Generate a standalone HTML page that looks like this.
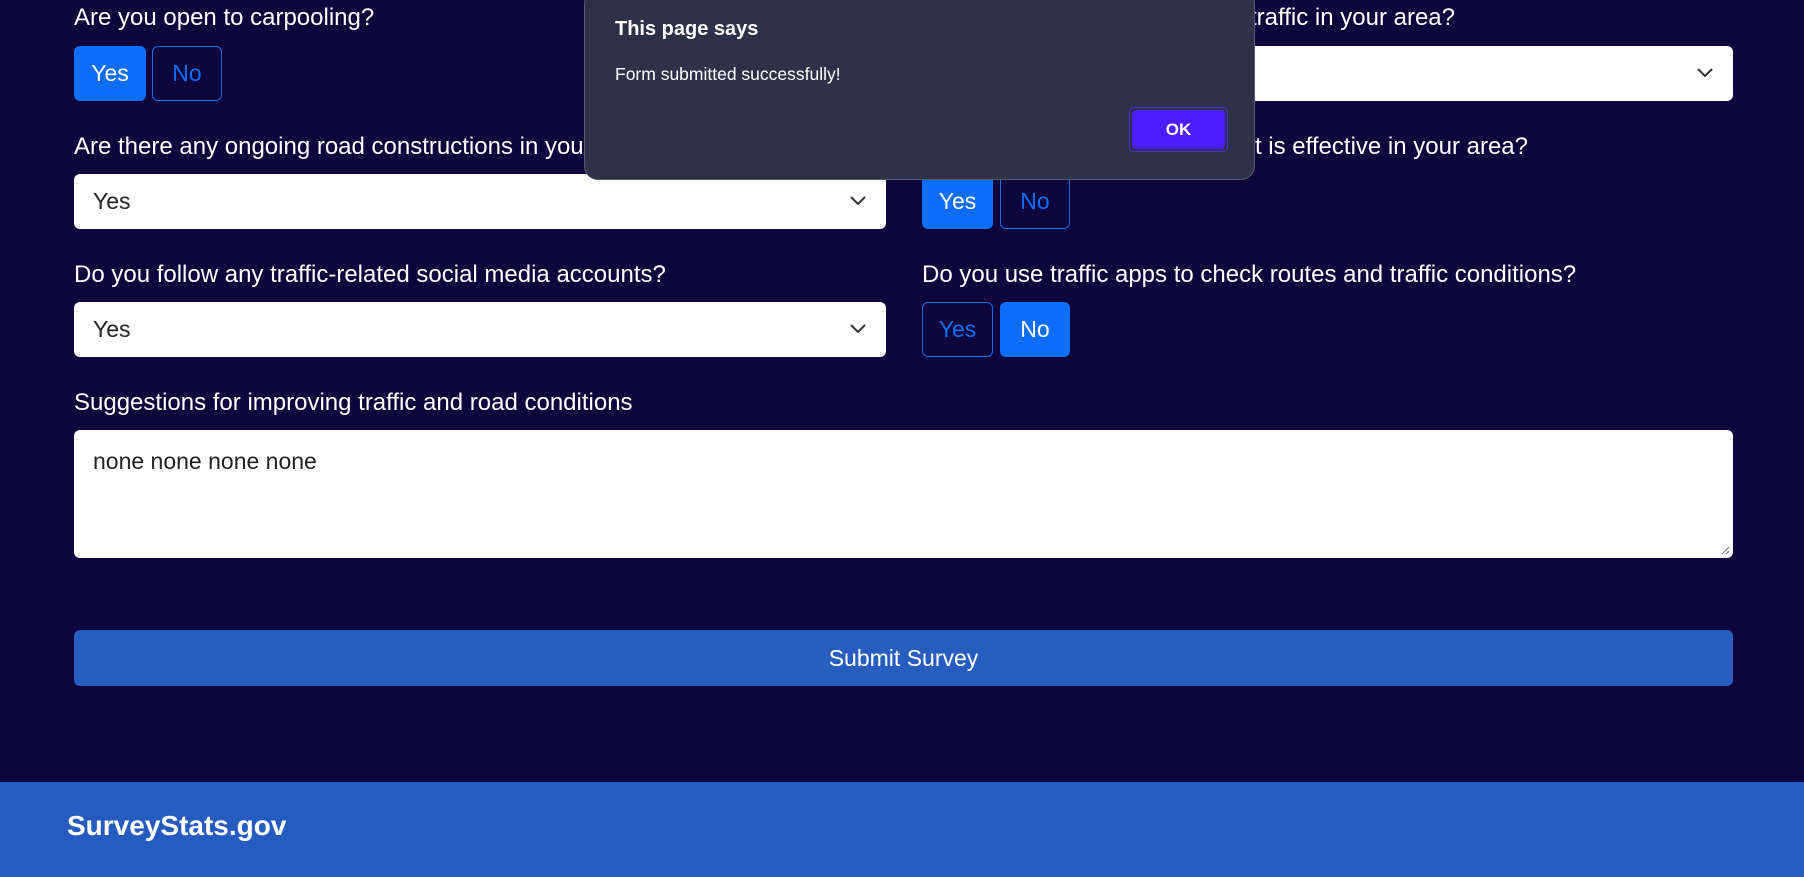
<!DOCTYPE html>
<html><head><style>
body{margin:0;width:1804px;height:877px;background:#0c063d;font-family:"Liberation Sans",sans-serif;position:relative;overflow:hidden;color:#fff}
.a{position:absolute}
.lbl{font-size:24px;color:#fff;white-space:nowrap}
.sel{background:#fff;border-radius:6px;color:#222;font-size:23px;box-sizing:border-box;padding-left:19px;display:flex;align-items:center}
.sel svg{position:absolute;right:20px;top:50%;margin-top:-6px}
.btn{border-radius:6px;font-size:23px;display:flex;align-items:center;justify-content:center;box-sizing:border-box}
.on{background:#0d6efd;color:#fff}
.off{border:1px solid #0d6efd;color:#0d6efd}
</style></head><body>
<div class="a lbl" style="left:74px;top:4px">Are you open to carpooling?</div>
<div class="a btn on" style="left:74px;top:46px;width:72px;height:55px">Yes</div>
<div class="a btn off" style="left:152px;top:46px;width:70px;height:55px">No</div>
<div class="a lbl" style="right:349px;top:4px">How do you rate the level of traffic in your area?</div>
<div class="a sel" style="left:922px;top:46px;width:811px;height:55px"><svg width="16" height="10" viewBox="0 0 16 10"><path d="M1 1l7 7 7-7" stroke="#333" stroke-width="2" fill="none"/></svg></div>

<div class="a lbl" style="left:74px;top:133px">Are there any ongoing road constructions in your area?</div>
<div class="a sel" style="left:74px;top:174px;width:812px;height:55px">Yes<svg width="16" height="10" viewBox="0 0 16 10"><path d="M1 1l7 7 7-7" stroke="#333" stroke-width="2" fill="none"/></svg></div>
<div class="a lbl" style="right:276px;top:133px">Do you believe public transport is effective in your area?</div>
<div class="a btn on" style="left:922px;top:174px;width:71px;height:55px">Yes</div>
<div class="a btn off" style="left:1000px;top:174px;width:70px;height:55px">No</div>

<div class="a lbl" style="left:74px;top:261px">Do you follow any traffic-related social media accounts?</div>
<div class="a sel" style="left:74px;top:302px;width:812px;height:55px">Yes<svg width="16" height="10" viewBox="0 0 16 10"><path d="M1 1l7 7 7-7" stroke="#333" stroke-width="2" fill="none"/></svg></div>
<div class="a lbl" style="left:922px;top:261px">Do you use traffic apps to check routes and traffic conditions?</div>
<div class="a btn off" style="left:922px;top:302px;width:71px;height:55px">Yes</div>
<div class="a btn on" style="left:1000px;top:302px;width:70px;height:55px">No</div>

<div class="a lbl" style="left:74px;top:389px">Suggestions for improving traffic and road conditions</div>
<div class="a" style="left:74px;top:430px;width:1659px;height:128px;background:#fff;border-radius:6px;color:#222;font-size:23px;box-sizing:border-box;padding:18px 19px">none none none none
<svg style="position:absolute;right:3px;bottom:3px" width="10" height="10" viewBox="0 0 10 10"><path d="M9 2L2 9M9 6L6 9" stroke="#777" stroke-width="1"/></svg></div>

<div class="a btn" style="left:74px;top:630px;width:1659px;height:56px;background:#265dbf;color:#fff">Submit Survey</div>

<div class="a" style="left:0;top:782px;width:1804px;height:95px;background:#265cbf"></div>
<div class="a" style="left:67px;top:810px;font-size:28px;font-weight:bold">SurveyStats.gov</div>

<div class="a" style="left:584px;top:-10px;width:671px;height:190px;background:#2e3249;border:1px solid #555a6c;border-radius:14px;box-sizing:border-box"></div>
<div class="a" style="left:615px;top:18px;font-size:20px;font-weight:bold">This page says</div>
<div class="a" style="left:615px;top:64px;font-size:17.5px">Form submitted successfully!</div>
<div class="a" style="left:1129px;top:107px;width:99px;height:45px;border:1px solid #4d2be0;border-radius:5px;box-sizing:border-box;padding:2px"><div style="background:#4c1dff;border-radius:4px;height:100%;display:flex;align-items:center;justify-content:center;font-weight:bold;font-size:17px">OK</div></div>
</body></html>
